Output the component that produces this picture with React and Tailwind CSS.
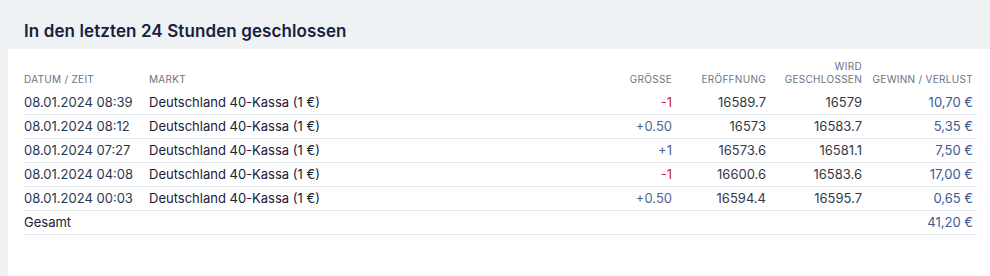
import React from 'react';

const ROWS = [
  { time: '08.01.2024 08:39', market: 'Deutschland 40-Kassa (1 €)', size: '-1', open: '16589.7', close: '16579', pl: '10,70 €' },
  { time: '08.01.2024 08:12', market: 'Deutschland 40-Kassa (1 €)', size: '+0.50', open: '16573', close: '16583.7', pl: '5,35 €' },
  { time: '08.01.2024 07:27', market: 'Deutschland 40-Kassa (1 €)', size: '+1', open: '16573.6', close: '16581.1', pl: '7,50 €' },
  { time: '08.01.2024 04:08', market: 'Deutschland 40-Kassa (1 €)', size: '-1', open: '16600.6', close: '16583.6', pl: '17,00 €' },
  { time: '08.01.2024 00:03', market: 'Deutschland 40-Kassa (1 €)', size: '+0.50', open: '16594.4', close: '16595.7', pl: '0,65 €' },
];

export default function App() {
  return (
    <div
      className="min-h-[276px] bg-[#eef2f4] pl-2"
      style={{ fontFamily: 'Inter, "Noto Sans", sans-serif' }}
    >
      <h2 className="pt-[19px] pb-[6px] pl-4 text-[17px] leading-6 font-semibold text-[#17213d] tracking-[0.1px]">
        In den letzten 24 Stunden geschlossen
      </h2>

      <div className="bg-white min-h-[227px] pl-4 pr-[13px] pt-[11px]">
        <table className="w-full table-fixed border-collapse text-[13px]">
          <colgroup>
            <col className="w-[125px]" />
            <col />
            <col className="w-[94px]" />
            <col className="w-[94px]" />
            <col className="w-[96px]" />
            <col className="w-[111px]" />
          </colgroup>
          <thead>
            <tr className="text-[10px] leading-[13px] uppercase tracking-[0.3px] text-[#6b7382] align-bottom">
              <th className="text-left font-normal pb-[4px]">Datum / Zeit</th>
              <th className="text-left font-normal pb-[4px]">Markt</th>
              <th className="text-right font-normal pb-[4px] pr-1">Grösse</th>
              <th className="text-right font-normal pb-[4px] pr-1">Eröffnung</th>
              <th className="text-right font-normal pb-[4px] pr-1">Wird<br />Geschlossen</th>
              <th className="text-right font-normal pb-[4px] pr-1">Gewinn / Verlust</th>
            </tr>
          </thead>
          <tbody>
            {ROWS.map((r) => (
              <tr key={r.time} className="h-6 border-b border-[#e2e8ec] [&>td]:pt-[2px]">
                <td className="text-[#2a3652]">{r.time}</td>
                <td className="text-[#1b2035]">{r.market}</td>
                <td className={`text-right pr-1 ${r.size.startsWith('-') ? 'text-[#c8262f]' : 'text-[#4d6490]'}`}>
                  {r.size}
                </td>
                <td className="text-right pr-1 text-[#333a48]">{r.open}</td>
                <td className="text-right pr-1 text-[#333a48]">{r.close}</td>
                <td className="text-right pr-1 text-[#3c5a94]">{r.pl}</td>
              </tr>
            ))}
            <tr className="h-6 border-b border-[#e2e8ec] [&>td]:pt-[2px]">
              <td className="text-[#1b2035]">Gesamt</td>
              <td />
              <td />
              <td />
              <td />
              <td className="text-right pr-1 text-[#3c5a94]">41,20 €</td>
            </tr>
          </tbody>
        </table>
      </div>
    </div>
  );
}
